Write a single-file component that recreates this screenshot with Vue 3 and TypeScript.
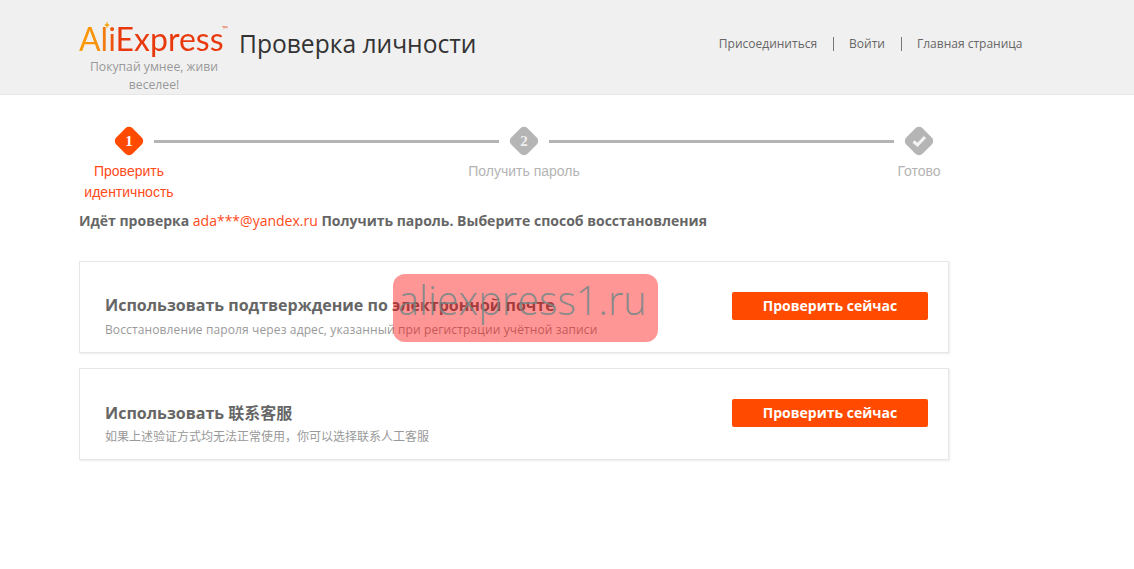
<script setup lang="ts">
const navItems: string[] = ['Присоединиться', 'Войти', 'Главная страница']
const cards = [
  { title: 'Использовать подтверждение по электронной почте', sub: 'Восстановление пароля через адрес, указанный при регистрации учётной записи', cjk: false },
  { title: 'Использовать 联系客服', sub: '如果上述验证方式均无法正常使用，你可以选择联系人工客服', cjk: true },
]
</script>

<template>
  <div class="page">
    <header class="header">
      <div class="brand">
        <div class="logo">AliExpress<span class="tm">™</span><i class="spark"></i></div>
        <div class="slogan">Покупай умнее, живи веселее!</div>
      </div>
      <h1 class="title">Проверка личности</h1>
      <nav class="nav">
        <a v-for="n in navItems" :key="n" class="nav-link">{{ n }}</a>
      </nav>
    </header>

    <main class="main">
      <div class="track">
        <svg class="dia" viewBox="0 0 28 28"><rect x="2.5" y="2.5" width="23" height="23" rx="5" transform="rotate(45 14 14)" fill="#ff4a00"/><text x="14" y="19" text-anchor="middle" class="num" fill="#fff">1</text></svg>
        <div class="line"></div>
        <svg class="dia" viewBox="0 0 28 28"><rect x="2.5" y="2.5" width="23" height="23" rx="5" transform="rotate(45 14 14)" fill="#b5b5b5"/><text x="14" y="19" text-anchor="middle" class="num" fill="#eee">2</text></svg>
        <div class="line"></div>
        <svg class="dia" viewBox="0 0 28 28"><rect x="2.5" y="2.5" width="23" height="23" rx="5" transform="rotate(45 14 14)" fill="#b5b5b5"/><path d="M8.5 14.5L12.5 18L20 10" fill="none" stroke="#f4f4f4" stroke-width="3"/></svg>
      </div>
      <div class="labels">
        <div class="label active"><span>Проверить идентичность</span></div>
        <div class="label nowrap"><span>Получить пароль</span></div>
        <div class="label"><span>Готово</span></div>
      </div>

      <p class="lead">Идёт проверка <span class="email">ada***@yandex.ru</span> Получить пароль. Выберите способ восстановления</p>

      <section v-for="c in cards" :key="c.title" class="card">
        <div class="card-text">
          <div class="card-title" :class="{ cjk: c.cjk }">{{ c.title }}</div>
          <div class="card-sub" :class="{ cjk: c.cjk }">{{ c.sub }}</div>
        </div>
        <button class="btn">Проверить сейчас</button>
      </section>
    </main>

    <div class="watermark">aliexpress1.ru</div>
  </div>
</template>

<style>
html, body { margin: 0; background: #fff; }
</style>

<style scoped>
.page {
  position: relative;
  width: 1134px;
  height: 569px;
  overflow: hidden;
  font-family: "Open Sans", "Noto Sans CJK SC", sans-serif;
  color: #666;
}
.header {
  display: flex;
  align-items: flex-start;
  height: 94px;
  padding-left: 79px;
  background: #f0f0f0;
  border-bottom: 1px solid #e6e6e6;
}
.brand { width: 150px; padding-top: 20px; }
.logo {
  position: relative;
  width: 150px;
  height: 37px;
  font: 400 32px/37px "Lato", sans-serif;
  white-space: nowrap;
  background: linear-gradient(90deg, #ff9a00 0%, #f79010 14%, #e8380c 26%, #e8380c 100%);
  -webkit-background-clip: text;
  background-clip: text;
  color: transparent;
}
.tm {
  position: absolute;
  left: 143px;
  top: -9px;
  font-size: 8px;
  color: #e8664a;
}
.spark {
  position: absolute;
  left: 25px;
  top: 1px;
  width: 6px;
  height: 8px;
  background: #f5a000;
  clip-path: polygon(50% 0, 62% 38%, 100% 50%, 62% 62%, 50% 100%, 38% 62%, 0 50%, 38% 38%);
}
.slogan {
  padding: 0 5px;
  margin-top: 1px;
  text-align: center;
  font-size: 12.2px;
  line-height: 18px;
  color: #999;
}
.title {
  margin: 25px 0 0 10px;
  font-size: 24.6px;
  line-height: 37px;
  font-weight: 400;
  color: #333;
}
.nav {
  display: flex;
  margin: 37px 0 0 auto;
  padding-right: 96px;
}
.nav-link {
  padding: 0 15.5px;
  font-size: 12px;
  line-height: 14px;
  color: #666;
  border-left: 1px solid #777;
}
.nav-link:first-child { border-left: 0; }
.main { padding: 32px 0 0 79px; width: 890px; }
.track {
  display: flex;
  align-items: center;
  gap: 11px;
  padding-left: 36px;
}
.dia { width: 28px; height: 28px; flex: none; overflow: visible; }
.num { font: 700 15px "Liberation Serif", serif; }
.line { width: 345px; height: 3px; background: #b4b4b4; }
.labels {
  display: flex;
  gap: 295px;
  margin-top: 6px;
}
.label {
  display: flex;
  justify-content: center;
  width: 100px;
  text-align: center;
  font-size: 14px;
  line-height: 21px;
  color: #b4b4b4;
  font-family: "Liberation Sans", sans-serif;
}
.label.nowrap { white-space: nowrap; }
.label.active { color: #ff4a1a; }
.lead {
  margin: 8px 0 30px;
  font-size: 14px;
  line-height: 20px;
  font-weight: 700;
  color: #666;
  white-space: nowrap;
}
.email { font-weight: 400; color: #ff4a1a; }
.card {
  display: flex;
  align-items: flex-start;
  justify-content: space-between;
  box-sizing: border-box;
  width: 870px;
  height: 92px;
  margin-bottom: 15px;
  padding: 29px 20px 0 25px;
  background: #fff;
  border: 1px solid #e6e6e6;
  box-shadow: 1px 1px 2px rgba(0, 0, 0, 0.08);
}
.card-title {
  font-size: 16px;
  line-height: 28px;
  font-weight: 700;
  color: #666;
  white-space: nowrap;
}
.card-title.cjk { padding-top: 1px; }
.card-sub {
  margin-top: 2px;
  font-size: 12px;
  letter-spacing: 0.12px;
  line-height: 18px;
  color: #999;
  white-space: nowrap;
}
.card-sub.cjk { margin-top: 1px; letter-spacing: 0; }
.btn {
  width: 196px;
  height: 28px;
  flex: none;
  margin-top: 1px;
  padding: 0 0 2px;
  border: 0;
  border-radius: 2px;
  background: #ff4a00;
  color: #fff;
  font: 700 14px "Open Sans", sans-serif;
}
.watermark {
  position: absolute;
  left: 393px;
  top: 274px;
  box-sizing: border-box;
  width: 265px;
  height: 68px;
  padding-left: 5px;
  border-radius: 12px;
  background: rgba(255, 0, 0, 0.41);
  color: rgba(115, 135, 135, 0.85);
  font-size: 39.6px;
  font-weight: 300;
  line-height: 52px;
  white-space: nowrap;
}
</style>
